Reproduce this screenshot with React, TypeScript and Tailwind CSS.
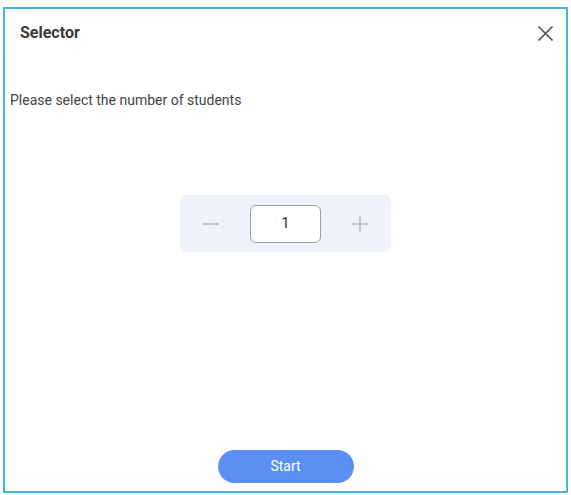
import React, { useState } from "react";

const font = { fontFamily: '"Roboto", "Liberation Sans", sans-serif' };

const Stepper = ({ value, onChange }: { value: number; onChange: (v: number) => void }) => (
  <div className="flex h-[57px] w-[211px] items-center justify-between rounded-md bg-[#eef2fb] px-[21px]">
    <button onClick={() => onChange(Math.max(1, value - 1))} className="flex h-5 w-5 items-center justify-center">
      <svg width="18" height="18" viewBox="0 0 18 18">
        <line x1="1" y1="9" x2="17" y2="9" stroke="#b4b9c4" strokeWidth="1.6" />
      </svg>
    </button>
    <div className="flex h-[38px] w-[71px] items-center justify-center rounded-[6px] border border-[#9a9ea6] bg-white text-[15px] text-[#333]">
      {value}
    </div>
    <button onClick={() => onChange(value + 1)} className="flex h-5 w-5 items-center justify-center">
      <svg width="18" height="18" viewBox="0 0 18 18">
        <line x1="1" y1="9" x2="17" y2="9" stroke="#b4b9c4" strokeWidth="1.6" />
        <line x1="9" y1="1" x2="9" y2="17" stroke="#b4b9c4" strokeWidth="1.6" />
      </svg>
    </button>
  </div>
);

export default function App() {
  const [count, setCount] = useState(1);

  return (
    <div className="h-[495px] w-[571px] bg-white pb-[2px] pl-[3px] pr-[3px] pt-[7px]" style={font}>
      <div className="flex h-full flex-col border-2 border-[#48b5dc]">
        <div className="flex h-[48px] items-center justify-between bg-[#fdfdfe] pl-[15px] pr-[11px]">
          <span className="text-[16px] font-bold text-[#3a3a3a]">Selector</span>
          <button className="flex h-5 w-5 items-center justify-center">
            <svg width="17" height="17" viewBox="0 0 17 17">
              <path d="M1.5 1.5 L15.5 15.5 M15.5 1.5 L1.5 15.5" stroke="#555" strokeWidth="1.7" />
            </svg>
          </button>
        </div>
        <p className="mt-[33px] pl-[5px] text-[14px] text-[#444]">Please select the number of students</p>
        <div className="mt-[84px] flex justify-center">
          <Stepper value={count} onChange={setCount} />
        </div>
        <div className="flex-1" />
        <div className="mb-[8px] flex justify-center">
          <button className="h-[33px] w-[136px] rounded-full bg-[#5b8ff2] text-[14px] text-white">
            Start
          </button>
        </div>
      </div>
    </div>
  );
}
